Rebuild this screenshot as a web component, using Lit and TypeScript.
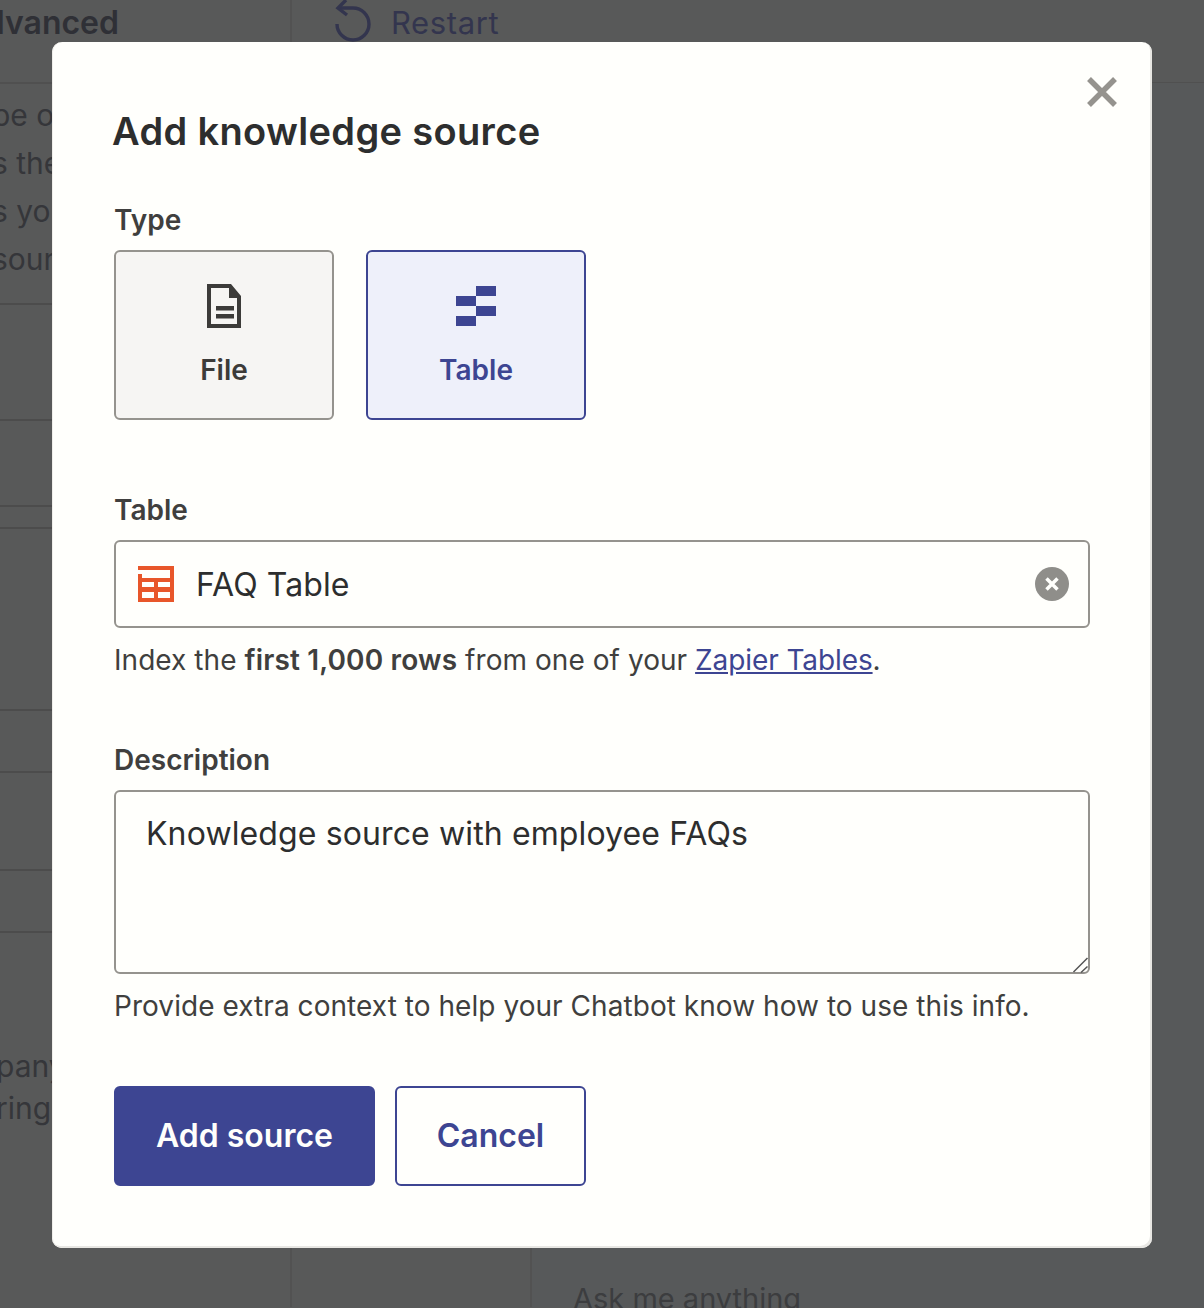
import { LitElement, css, html } from "lit";
import { customElement } from "lit/decorators.js";

// heights of the rows of the page behind the modal, top to bottom
const ROWS = [222, 116, 86, 22, 182, 62, 98, 62];

@customElement("app-root")
export class AppRoot extends LitElement {
  static styles = css`
    :host {
      display: block;
      position: relative;
      width: 1204px;
      height: 1308px;
      overflow: hidden;
      background: #585959;
      font-family: Inter, "Liberation Sans", sans-serif;
      color: #2d2e2e;
    }

    /* page behind the modal */
    .topbar {
      display: grid;
      grid-template-columns: 292px 1fr;
      height: 82px;
      border-bottom: 2px solid #505050;
      font-size: 32px;
      line-height: 46px;
      color: #2f3036;
    }
    .adv {
      display: flex;
      justify-content: flex-end;
      white-space: nowrap;
      font-weight: 600;
      padding-right: 171px;
      border-right: 2px solid #525252;
    }
    .restart {
      display: flex;
      align-items: center;
      gap: 17px;
      height: 46px;
      padding-left: 42px;
      color: #33354e;
      font-size: 31px;
      letter-spacing: 0.6px;
    }
    .restart svg {
      width: 40px;
      height: 46px;
      flex: none;
    }
    .under {
      display: grid;
      grid-template-columns: 292px 240px 1fr;
      height: 1224px;
      margin-top: -1px;
    }
    .col-left {
      border-right: 2px solid #525252;
      font-size: 30px;
      color: #35363a;
    }
    .row {
      border-bottom: 2px solid #4c4c4c;
      box-sizing: border-box;
    }
    .intro {
      padding-top: 8px;
      line-height: 48px;
      margin-left: -8px;
    }
    .tail {
      padding-top: 112px;
      margin-left: -4px;
      line-height: 42px;
    }
    .col-mid {
      border-right: 2px solid #525252;
    }
    .col-right {
      display: flex;
      flex-direction: column;
      justify-content: flex-end;
      padding-left: 41px;
      background: #57595a;
      font-size: 29px;
      line-height: 40px;
      color: #3c3d3f;
    }
    .ask {
      margin-bottom: -12px;
    }

    /* modal */
    .overlay {
      position: absolute;
      top: 42px;
      left: 52px;
      width: 1100px;
    }
    .modal {
      position: relative;
      box-sizing: border-box;
      height: 1206px;
      padding: 65px 62px 62px;
      background: #fffffc;
      border-radius: 10px;
      box-shadow: inset 1px 0 0 #efeeea, inset -2px -2px 0 #e8e7e3;
    }
    .close {
      position: absolute;
      top: 35px;
      right: 35px;
      width: 30px;
      height: 30px;
      padding: 0;
      border: 0;
      background: none;
      display: flex;
    }
    h1 {
      margin: 0 0 45px -2px;
      font-size: 38px;
      line-height: 48px;
      font-weight: 600;
      letter-spacing: 0.35px;
      color: #2d2e2e;
    }
    .label {
      display: block;
      font-size: 28px;
      line-height: 40px;
      font-weight: 600;
      color: #403f3e;
      margin-bottom: 10px;
    }
    .types {
      display: flex;
      gap: 32px;
      margin-bottom: 70px;
    }
    .type {
      box-sizing: border-box;
      width: 220px;
      height: 170px;
      border: 2px solid #95938e;
      border-radius: 6px;
      background: #f6f5f3;
      color: #3c3b39;
      display: flex;
      flex-direction: column;
      align-items: center;
      font: 600 28px/40px Inter, "Liberation Sans", sans-serif;
      padding: 32px 0 0;
    }
    .type .glyph {
      height: 46px;
      display: flex;
      align-items: flex-start;
      margin-bottom: 20px;
    }
    .type.selected {
      background: #eef0fa;
      border-color: #3d4592;
      color: #3d4592;
    }
    .type.selected svg {
      margin-top: 2px;
    }
    .picker {
      box-sizing: border-box;
      height: 88px;
      border: 2px solid #95938e;
      border-radius: 6px;
      display: flex;
      align-items: center;
      padding: 0 19px 0 22px;
      font-size: 32px;
      letter-spacing: 0.1px;
      gap: 22px;
    }
    .picker .name {
      flex: 1;
    }
    .help {
      margin: 12px 0 60px;
      font-size: 28px;
      line-height: 40px;
      color: #403f3e;
      letter-spacing: 0.05px;
    }
    .help b {
      font-weight: 600;
      letter-spacing: 0.15px;
      color: #403f3e;
    }
    .help a {
      color: #3d4592;
      letter-spacing: -0.1px;
      text-decoration: underline;
    }
    .area {
      position: relative;
    }
    .grip {
      position: absolute;
      right: 0;
      bottom: 0;
      width: 20px;
      height: 20px;
      pointer-events: none;
    }
    textarea {
      display: block;
      box-sizing: border-box;
      width: 100%;
      height: 184px;
      margin: 0;
      padding: 22px 30px;
      border: 2px solid #95938e;
      border-radius: 6px;
      outline: none;
      background: #fffffc;
      color: #2d2e2e;
      font: 400 32px/40px Inter, "Liberation Sans", sans-serif;
      letter-spacing: 0.12px;
      resize: none;
    }
    .actions {
      display: flex;
      gap: 20px;
    }
    .btn {
      box-sizing: border-box;
      height: 100px;
      border-radius: 6px;
      border: 2px solid #3d4592;
      font: 600 32px/40px Inter, "Liberation Sans", sans-serif;
      padding: 0;
    }
    .primary {
      width: 261px;
      background: #3d4592;
      color: #fffffc;
    }
    .secondary {
      width: 191px;
      background: #fffffc;
      color: #3d4592;
    }
  `;

  render() {
    return html`
      <div class="topbar">
        <div class="adv">Advanced</div>
        <div class="restart">
          <svg viewBox="0 0 40 46" fill="none" stroke="#33354e" stroke-width="3.400">
            <path d="M4 8H19a16 16 0 1 1-16 16" />
            <path d="M12 0 4 8l9 7" />
          </svg>
          Restart
        </div>
      </div>
      <div class="under">
        <div class="col-left">
          ${ROWS.map(
            (h, i) => html`<div class="row" style="height:${h}px">
              ${i === 0
                ? html`<div class="intro">pe of<br />s the<br />s you<br />sour</div>`
                : ""}
            </div>`
          )}
          <div class="tail">pany<br />ring</div>
        </div>
        <div class="col-mid"></div>
        <div class="col-right"><div class="ask">Ask me anything</div></div>
      </div>

      <div class="overlay">
        <div class="modal">
          <button class="close" aria-label="Close">
            <svg width="30" height="30" viewBox="0 0 30 30" stroke="#95938e" stroke-width="5.500">
              <path d="M2 2l26 26M28 2 2 28" />
            </svg>
          </button>
          <h1>Add knowledge source</h1>

          <span class="label">Type</span>
          <div class="types">
            <button class="type">
              <span class="glyph">
                <svg width="34" height="44" viewBox="0 0 34 44" fill="#3c3b39">
                  <path
                    fill-rule="evenodd"
                    d="M0 0H24L34 12V44H0ZM4 4V40H30V14H22V4Z"
                  />
                  <path d="M9 22H27V26.500H9ZM9 30H27V34.500H9Z" />
                </svg>
              </span>
              File
            </button>
            <button class="type selected">
              <span class="glyph">
                <svg width="40" height="40" viewBox="0 0 40 40" fill="#3d4592">
                  <path d="M20 0H40V10H20ZM0 10H20V20H0ZM20 20H40V30H20ZM0 30H20V40H0Z" />
                </svg>
              </span>
              Table
            </button>
          </div>

          <span class="label">Table</span>
          <div class="picker">
            <svg width="36" height="36" viewBox="0 0 36 36" fill="#e8562a">
              <path
                fill-rule="evenodd"
                d="M0 0H36V36H0ZM0 4V8H4V12H32V4ZM4 16V21H16V16ZM20 16V21H32V16ZM4 26V32H16V26ZM20 26V32H32V26Z"
              />
            </svg>
            <span class="name">FAQ Table</span>
            <svg width="34" height="34" viewBox="0 0 34 34">
              <circle cx="17" cy="17" r="17" fill="#8f8e8a" />
              <path d="M11.500 11.500l11 11M22.500 11.500l-11 11" stroke="#fffffc" stroke-width="3.500" />
            </svg>
          </div>
          <p class="help">
            Index the <b>first 1,000 rows</b> from one of your <a href="#">Zapier Tables</a>.
          </p>

          <span class="label">Description</span>
          <div class="area">
            <textarea .value=${"Knowledge source with employee FAQs"}></textarea>
            <svg class="grip" viewBox="0 0 20 20" stroke="#555" stroke-width="1.500">
              <path d="M3.500 18 17.500 4M11 18.500 17.500 12.500" />
            </svg>
          </div>
          <p class="help">Provide extra context to help your Chatbot know how to use this info.</p>

          <div class="actions">
            <button class="btn primary">Add source</button>
            <button class="btn secondary">Cancel</button>
          </div>
        </div>
      </div>
    `;
  }
}
